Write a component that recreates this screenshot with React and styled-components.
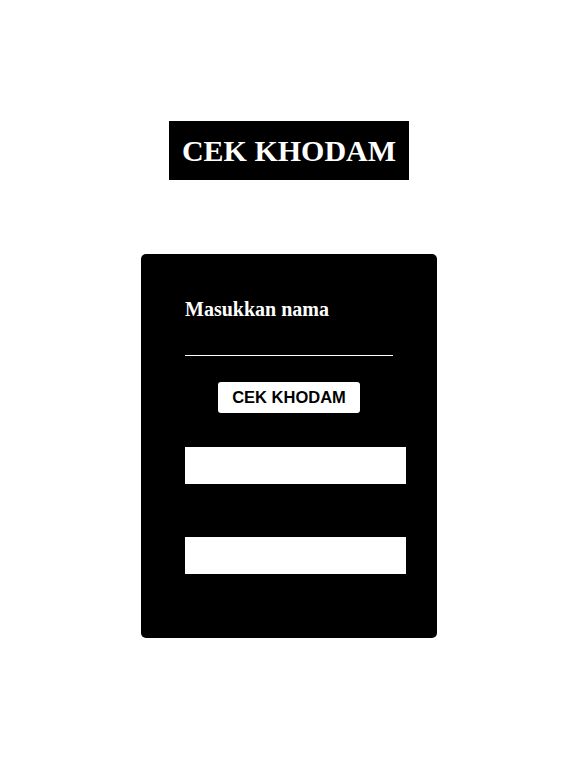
import React, { useState } from "react";
import styled, { createGlobalStyle } from "styled-components";

const GlobalStyle = createGlobalStyle`
  body {
    margin: 0;
    background: #fff;
    font-family: "Liberation Serif", "Times New Roman", serif;
  }
`;

const Page = styled.div`
  display: flex;
  flex-direction: column;
  align-items: center;
  padding: 121px 3px 0 0;
  min-height: 783px;
  box-sizing: border-box;
`;

const Title = styled.h1`
  margin: 0;
  width: 240px;
  height: 59px;
  background: #000;
  color: #fff;
  font-family: "Liberation Serif", "Times New Roman", serif;
  font-size: 30px;
  font-weight: bold;
  line-height: 59px;
  text-align: center;
`;

const Card = styled.div`
  margin-top: 74px;
  width: 296px;
  height: 384px;
  background: #000;
  border-radius: 5px;
  padding: 44px 31px 0 44px;
  box-sizing: border-box;
  display: flex;
  flex-direction: column;
`;

const Label = styled.label`
  color: #fff;
  font-family: "Liberation Serif", "Times New Roman", serif;
  font-size: 20px;
  font-weight: bold;
  line-height: 23px;
`;

const NameInput = styled.input`
  margin-top: 11px;
  width: 208px;
  height: 23px;
  background: transparent;
  border: none;
  border-bottom: 1px solid #fff;
  color: #fff;
  font-size: 16px;
  padding: 0;
  outline: none;
`;

const Button = styled.button`
  align-self: center;
  margin-top: 26px;
  margin-left: -13px;
  height: 31px;
  padding: 0 14px;
  background: #fff;
  color: #000;
  border: none;
  border-radius: 3px;
  font-family: "Liberation Sans", Arial, sans-serif;
  font-size: 16.5px;
  font-weight: bold;
  cursor: pointer;
`;

const ResultBox = styled.div`
  margin-top: ${(p) => p.$gap}px;
  width: 221px;
  height: 37px;
  background: #fff;
`;

export default function App() {
  const [name, setName] = useState("");

  return (
    <>
      <GlobalStyle />
      <Page>
        <Title>CEK KHODAM</Title>
        <Card>
          <Label htmlFor="nama">Masukkan nama</Label>
          <NameInput id="nama" value={name} onChange={(e) => setName(e.target.value)} />
          <Button>CEK KHODAM</Button>
          <ResultBox $gap={34} />
          <ResultBox $gap={53} />
        </Card>
      </Page>
    </>
  );
}
